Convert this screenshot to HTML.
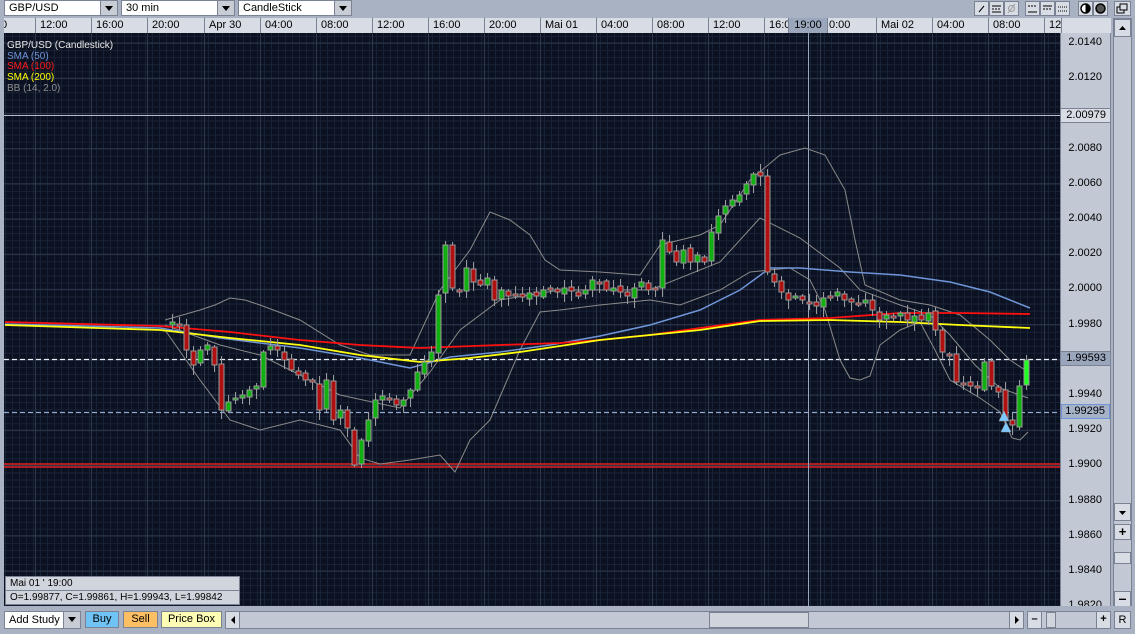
<!DOCTYPE html>
<html><head><meta charset="utf-8">
<style>
*{margin:0;padding:0;box-sizing:border-box}
body{width:1135px;height:634px;background:#a9b2c2;font-family:"Liberation Sans",sans-serif;font-size:11px;position:relative;overflow:hidden}
.abs{position:absolute}
.sel{background:#fff;border:1px solid #7a8294;height:16px;line-height:14px;padding-left:4px;color:#000}
.dd{position:absolute;top:0;right:0;width:17px;height:14px;background:#c8ccd4;border-left:1px solid #7a8294}
.dd:after{content:"";position:absolute;left:4px;top:5px;border-left:4px solid transparent;border-right:4px solid transparent;border-top:5px solid #000}
.btn{position:absolute;height:17px;border:1px solid #7a8294;text-align:center;line-height:15px;color:#000}
.tb{position:absolute;top:1px;width:15px;height:15px;background:#d8dce4;border:1px solid #7a8294}
</style></head><body>
<div class="abs sel" style="left:4px;top:0;width:114px">GBP/USD<div class="dd"></div></div>
<div class="abs sel" style="left:121px;top:0;width:114px">30 min<div class="dd"></div></div>
<div class="abs sel" style="left:238px;top:0;width:114px">CandleStick<div class="dd"></div></div>
<div class="tb" style="left:974px"><svg width="13" height="13"><line x1="4" y1="10" x2="9" y2="4" stroke="#000"/></svg></div>
<div class="tb" style="left:989px"><svg width="13" height="13"><line x1="2" y1="4" x2="11" y2="4" stroke="#000"/><line x1="2" y1="7" x2="11" y2="7" stroke="#000" stroke-dasharray="2 1"/><line x1="2" y1="10" x2="11" y2="10" stroke="#000"/></svg></div>
<div class="tb" style="left:1004px"><svg width="13" height="13"><circle cx="6.5" cy="6.5" r="3" fill="none" stroke="#999"/><line x1="3" y1="11" x2="10" y2="2" stroke="#999"/></svg></div>
<div class="tb" style="left:1025px"><svg width="13" height="13"><line x1="2" y1="4" x2="11" y2="4" stroke="#000" stroke-dasharray="2 1"/><line x1="2" y1="10" x2="11" y2="10" stroke="#000"/></svg></div>
<div class="tb" style="left:1040px"><svg width="13" height="13"><line x1="2" y1="4" x2="11" y2="4" stroke="#000"/><line x1="2" y1="7" x2="11" y2="7" stroke="#000" stroke-dasharray="2 1"/></svg></div>
<div class="tb" style="left:1055px"><svg width="13" height="13"><line x1="2" y1="5" x2="11" y2="5" stroke="#000" stroke-dasharray="1 1"/><line x1="2" y1="9" x2="11" y2="9" stroke="#000" stroke-dasharray="1 1"/></svg></div>
<div class="tb" style="left:1078px"><svg width="13" height="13"><circle cx="6.5" cy="6.5" r="4.5" fill="#fff" stroke="#000" stroke-width="1.5"/><path d="M6.5 2 A4.5 4.5 0 0 1 6.5 11Z" fill="#000"/></svg></div>
<div class="tb" style="left:1093px"><svg width="13" height="13"><circle cx="6.5" cy="6.5" r="4.5" fill="#555" stroke="#000" stroke-width="1.5"/></svg></div>
<div class="tb" style="left:1114px;width:17px"><svg width="15" height="13"><rect x="2" y="5" width="7" height="6" fill="none" stroke="#000"/><rect x="5" y="2" width="7" height="6" fill="#d8dce4" stroke="#000"/></svg></div>

<div class="abs" style="left:4px;top:18px;width:1057px;height:16px;background:#d8dce4;border-bottom:1px solid #7a8294;overflow:hidden" id="tax"></div>
<div class="abs" style="left:1061px;top:18px;width:50px;height:16px;background:#d8dce4;border-left:1px solid #7a8294"></div>
<div class="abs" style="left:1060px;top:33px;width:51px;height:573px;background:#c3c9d4;border-left:1px solid #7a8294;border-right:1px solid #7a8294;overflow:hidden" id="pax"></div>
<div class="abs" style="left:1113px;top:18px;width:19px;height:588px;background:#c3c9d4;border:1px solid #7a8294"></div>
<div class="abs" style="left:1114px;top:19px;width:17px;height:18px;background:#d8dce4;border:1px solid #7a8294"><svg width="15" height="16"><path d="M4 10 L7.5 6 L11 10Z" fill="#000"/></svg></div>
<div class="abs" style="left:1114px;top:503px;width:17px;height:18px;background:#d8dce4;border:1px solid #7a8294"><svg width="15" height="16"><path d="M4 7 L7.5 11 L11 7Z" fill="#000"/></svg></div>
<div class="abs" style="left:1114px;top:524px;width:17px;height:16px;background:#d8dce4;border:1px solid #7a8294;text-align:center;font-weight:bold;line-height:13px;font-size:13px">+</div>
<div class="abs" style="left:1114px;top:552px;width:17px;height:12px;background:#d8dce4;border:1px solid #7a8294"></div>
<div class="abs" style="left:1114px;top:591px;width:17px;height:16px;background:#d8dce4;border:1px solid #7a8294;text-align:center;font-weight:bold;line-height:12px;font-size:14px">–</div>

<svg class="abs" style="left:4px;top:33px" width="1056" height="573" id="ch"></svg>

<div class="abs" style="left:7px;top:41px;color:#e8e8e8;line-height:10.7px;font-size:10px">GBP/USD (Candlestick)<br><span style="color:#6f95d8">SMA (50)</span><br><span style="color:#ff1a1a">SMA (100)</span><br><span style="color:#ffff00">SMA (200)</span><br><span style="color:#909090">BB (14, 2.0)</span></div>

<div class="abs" style="left:5px;top:576px;width:235px;height:29px;background:#d0d4dc;border:1px solid #7a8294;font-size:10px;line-height:13px;padding-left:4px">Mai 01 ' 19:00<div style="border-top:1px solid #7a8294;margin-left:-4px;padding-left:4px">O=1.99877, C=1.99861, H=1.99943, L=1.99842</div></div>

<div class="abs" style="left:0;top:606px;width:1135px;height:28px;background:#a9b2c2"></div>
<div class="abs sel" style="left:4px;top:611px;width:77px;height:18px;line-height:16px">Add Study<div class="dd" style="height:16px"></div></div>
<div class="btn" style="left:85px;top:611px;width:34px;background:#6fc3f5">Buy</div>
<div class="btn" style="left:123px;top:611px;width:35px;background:#fdbf64">Sell</div>
<div class="btn" style="left:161px;top:611px;width:61px;background:#fcfcb4">Price Box</div>
<div class="abs" style="left:225px;top:611px;width:799px;height:18px;background:#c3c9d4;border:1px solid #7a8294"></div>
<div class="abs" style="left:226px;top:612px;width:14px;height:16px;background:#d8dce4;border-right:1px solid #7a8294"><svg width="14" height="16"><path d="M5 8 L9 4 L9 12Z" fill="#000"/></svg></div>
<div class="abs" style="left:709px;top:612px;width:100px;height:16px;background:#d0d4dc;border:1px solid #7a8294"></div>
<div class="abs" style="left:1009px;top:612px;width:14px;height:16px;background:#d8dce4;border-left:1px solid #7a8294"><svg width="14" height="16"><path d="M5 4 L9 8 L5 12Z" fill="#000"/></svg></div>
<div class="abs" style="left:1027px;top:611px;width:84px;height:18px;background:#c3c9d4;border:1px solid #7a8294"></div>
<div class="abs" style="left:1028px;top:612px;width:14px;height:16px;background:#d8dce4;border-right:1px solid #7a8294;text-align:center;font-weight:bold;line-height:14px">–</div>
<div class="abs" style="left:1046px;top:612px;width:10px;height:16px;background:#d0d4dc;border:1px solid #7a8294"></div>
<div class="abs" style="left:1096px;top:612px;width:14px;height:16px;background:#d8dce4;border-left:1px solid #7a8294;text-align:center;font-weight:bold;line-height:14px">+</div>
<div class="abs" style="left:1114px;top:611px;width:17px;height:18px;background:#d8dce4;border:1px solid #7a8294;text-align:center;line-height:16px">R</div>

<script>
(function(){
var NS="http://www.w3.org/2000/svg",ch=document.getElementById("ch");
function el(t,a){var e=document.createElementNS(NS,t);for(var k in a)e.setAttribute(k,a[k]);ch.appendChild(e);return e}
el("rect",{x:0,y:0,width:1056,height:573,fill:"#0b1120"});
var d="";for(var x=1;x<1056;x+=7)d+="M"+(x+.5)+" 0V573";for(var y=3;y<573;y+=7.04)d+="M0 "+(y+.5).toFixed(1)+"H1056";
el("path",{d:d,stroke:"#182236","stroke-width":1,fill:"none"});
d="";var tx=[-26,31,87,143,200,256,312,368,424,480,536,592,648,704,760,816,872,928,984,1040];
tx.forEach(function(x){d+="M"+(x+.5)+" 0V573"});
for(var i=0;i<17;i++){var yy=10+35.2*i;d+="M0 "+yy.toFixed(1)+"H1056"}
el("path",{d:d,stroke:"#2c374c","stroke-width":1,fill:"none"});
var tl=["0","12:00","16:00","20:00","Apr 30","04:00","08:00","12:00","16:00","20:00","Mai 01","04:00","08:00","12:00","16:0","","Mai 02","04:00","08:00","12:"];
var tax=document.getElementById("tax"),h='<div style="position:absolute;left:-3px;top:0;line-height:15px">0</div>';
tx.forEach(function(x,i){if(i==0)return;h+='<div style="position:absolute;left:'+(x)+'px;top:0;height:15px;border-left:1px solid #7a8294;padding-left:4px;line-height:15px;font-size:11px;white-space:nowrap">'+tl[i]+'</div>'});
h+='<div style="position:absolute;left:784px;top:0;width:40px;height:15px;background:#9aa6bc;border-left:1px solid #7a8294;border-right:1px solid #7a8294;text-align:center;line-height:15px">19:00</div><div style="position:absolute;left:825px;top:0;line-height:15px">0:00</div>';
tax.innerHTML=h;
var pax=document.getElementById("pax");h="";
for(var i=0;i<17;i++){if(i==2)continue;var p=(2.014-0.002*i).toFixed(4);h+='<div style="position:absolute;right:8px;top:'+(10+35.2*i-7)+'px;font-size:11px">'+p+'</div>'}
h+='<div style="position:absolute;left:0;top:75px;width:49px;height:15px;background:#d8dce4;border-top:1px solid #7a8294;border-bottom:1px solid #7a8294;text-align:right;padding-right:4px;line-height:13px">2.00979</div>';
h+='<div style="position:absolute;left:0;top:318px;width:49px;height:15px;background:#9aa6bc;border-top:1px solid #7a8294;border-bottom:1px solid #7a8294;text-align:right;padding-right:4px;line-height:13px">1.99593</div>';
h+='<div style="position:absolute;left:0;top:371px;width:49px;height:15px;background:#a6b2c8;border:1px solid #6f95d8;text-align:right;padding-right:4px;line-height:13px">1.99295</div>';
pax.innerHTML=h;
var T=-33,L=-4;
function poly(pts,c,w,extra){var s=pts.map(function(p){return (p[0]+L)+","+(p[1]+T)}).join(" ");var a={points:s,fill:"none",stroke:c,"stroke-width":w};for(var k in extra)a[k]=extra[k];el("polyline",a)}
poly([[4,115.5],[1060,115.5]],"#b8bcc8",1);
poly([[4,359.5],[1060,359.5]],"#e8ecf4",1.2,{"stroke-dasharray":"5 3"});
poly([[4,412.5],[1060,412.5]],"#8fa8d8",1.2,{"stroke-dasharray":"5 3"});
poly([[4,464],[1060,464]],"#e02020",1.5);poly([[4,467],[1060,467]],"#e02020",1.5);
poly([[808.5,33],[808.5,606]],"#9aa6bc",1);
poly([[165,320],[200,310],[215,305],[230,298],[245,300],[260,305],[300,320],[340,345],[370,355],[410,355],[440,290],[470,250],[490,212],[510,220],[530,235],[545,260],[560,270],[600,272],[640,275],[660,245],[680,240],[700,235],[720,225],[750,180],[780,155],[805,148],[825,155],[845,190],[855,240],[865,285],[900,300],[930,305],[960,315],[990,340],[1010,360],[1028,372]],"#8a8a8a",1);
poly([[165,330],[200,380],[230,420],[260,430],[300,420],[340,430],[360,458],[380,464],[410,460],[440,455],[455,472],[470,440],[490,420],[505,385],[520,350],[540,312],[560,310],[600,305],[650,300],[680,305],[720,290],[750,272],[790,268],[810,280],[825,310],[840,360],[850,378],[860,380],[870,376],[880,345],[900,330],[920,322],[935,350],[950,380],[980,398],[1000,412],[1012,438],[1020,440],[1028,432]],"#8a8a8a",1);
poly([[165,325],[220,345],[260,355],[300,375],[340,395],[400,408],[430,372],[460,330],[500,300],[560,290],[650,290],[720,262],[760,218],[800,238],[840,268],[860,290],[900,305],[930,315],[950,335],[975,365],[1000,388],[1028,398]],"#8a8a8a",1);
poly([[5,324],[160,328],[220,338],[300,348],[360,358],[410,368],[450,357],[500,352],[550,345],[600,336],[650,325],[700,310],[740,290],[770,268],[800,268],[850,272],[900,275],[950,282],[990,292],[1030,308]],"#6f95d8",1.5);
poly([[5,322],[160,326],[230,332],[300,340],[360,345],[420,348],[500,345],[560,343],[600,340],[650,335],[700,328],[760,320],[830,318],[900,313],[960,313],[1030,314]],"#ff1010",1.8);
poly([[5,325],[160,330],[230,338],[300,345],[360,355],[420,362],[470,358],[520,352],[560,346],[600,340],[650,335],[700,330],[760,321],[830,320],[900,322],[960,325],[1030,328]],"#ffff10",1.8);
var C=[[165,325],[172,322],[179,326],[186,350],[193,365],[200,350],[207,345],[214,365],[221,410],[228,402],[235,398],[242,395],[249,390],[256,386],[263,352],[270,346],[277,350],[284,360],[291,370],[298,375],[305,380],[312,382],[319,410],[326,380],[333,420],[340,410],[347,428],[354,465],[361,440],[368,420],[375,400],[382,396],[389,400],[396,405],[403,400],[410,390],[417,372],[424,362],[431,352],[438,295],[445,245],[452,288],[459,292],[466,268],[473,282],[480,285],[487,278],[494,300],[501,290],[508,296],[515,294],[522,297],[529,293],[536,296],[543,290],[550,289],[557,292],[564,288],[571,291],[578,296],[585,290],[592,280],[599,282],[606,290],[613,288],[620,292],[627,296],[634,288],[641,282],[648,290],[655,288],[662,240],[669,252],[676,262],[683,250],[690,262],[697,255],[704,262],[711,232],[718,216],[725,206],[732,200],[739,195],[746,184],[753,174],[760,176],[767,272],[774,282],[781,292],[788,300],[795,296],[802,300],[809,303],[816,306],[823,298],[830,296],[837,292],[844,300],[851,302],[858,305],[865,300],[872,310],[879,320],[886,315],[893,318],[900,313],[907,320],[914,316],[921,320],[928,313],[935,330],[942,352],[949,355],[956,382],[963,384],[970,386],[977,388],[984,362],[991,386],[998,392],[1005,420],[1012,425],[1019,386],[1026,360]];
var g=el("g",{transform:"translate("+L+","+T+")"});
function add(t,a){var e=document.createElementNS(NS,t);for(var k in a)e.setAttribute(k,a[k]);g.appendChild(e)}
for(var i=1;i<C.length;i++){var cx=C[i][0],c=C[i][1],o=C[i-1][1]+((i*7)%5-2);var tp=Math.min(o,c),bt=Math.max(o,c);if(bt-tp<2){bt=tp+2}
var up=c<o;var hw=2+((i*13)%7),lw=2+((i*11)%9);
add("line",{x1:cx+.5,y1:tp-hw,x2:cx+.5,y2:bt+lw,stroke:"#9a9a9a","stroke-width":1});
add("rect",{x:cx-2,y:tp,width:5,height:bt-tp,fill:i==C.length-1?"#22ff22":(up?"#10b010":"#b01010"),stroke:"#9a9a9a","stroke-width":1});}
add("path",{d:"M1004 411 L999 421 L1009 421Z M1006 422 L1001 432 L1011 432Z",fill:"#7cc8ff",stroke:"#9a9a9a","stroke-width":0.5});
})();
</script>
</body></html>
